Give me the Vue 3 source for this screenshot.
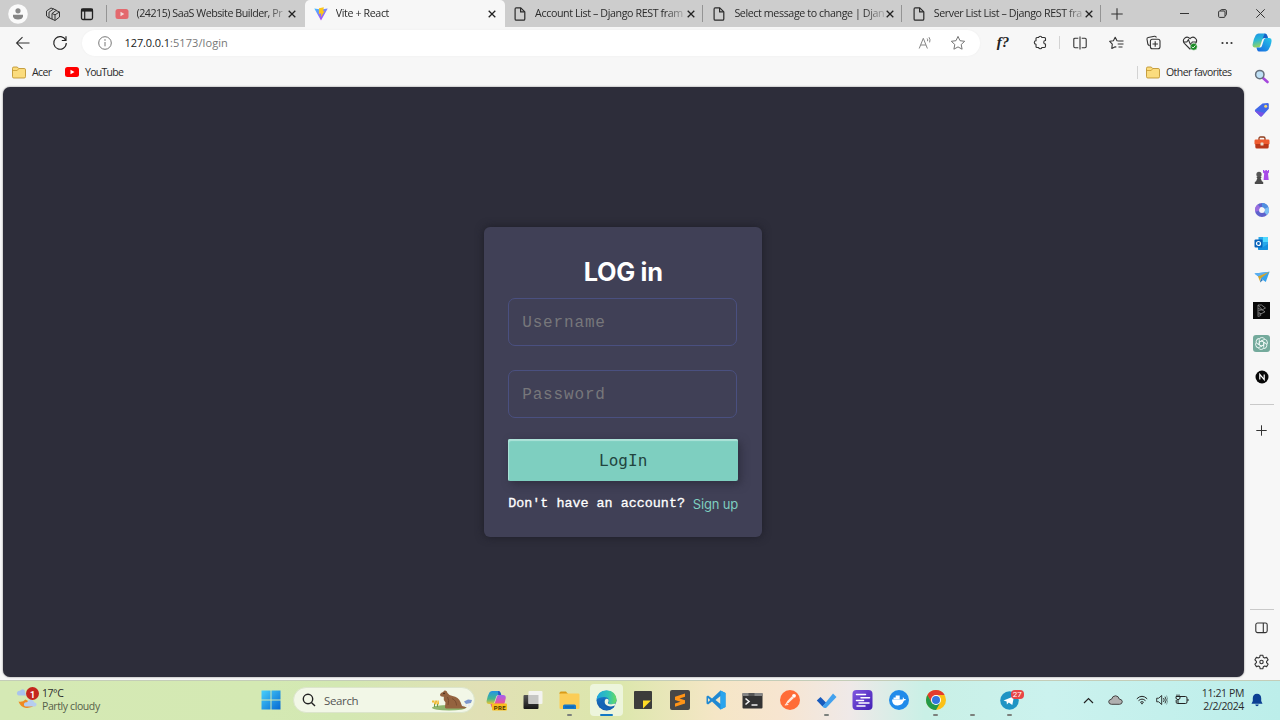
<script setup>
const tabs = [
  { kind: 'youtube', title: '(24215) SaaS Website Builder, Pr', active: false, sep: false, cls: 't1' },
  { kind: 'vite', title: 'Vite + React', active: true, sep: false, cls: 't2' },
  { kind: 'doc', title: 'Account List – Django REST fram', active: false, sep: true, cls: 't3' },
  { kind: 'doc', title: 'Select message to change | Djang', active: false, sep: true, cls: 't4' },
  { kind: 'doc', title: 'Server List List – Django REST fra', active: false, sep: true, cls: 't5' },
]
</script>

<template>
  <div class="screen">
    <header class="tabstrip">
      <div class="cell w36">
        <svg width="20" height="20" viewBox="0 0 20 20"><circle cx="10" cy="10" r="9.8" fill="#fafafa" /><circle cx="10" cy="6.8" r="2.6" fill="#8a8a8a" /><path d="M5 10.8h10v1.4c0 2-2.2 3.3-5 3.3s-5-1.300-5-3.300z" fill="#858585" /></svg>
      </div>
      <div class="cell w33">
        <svg width="16" height="16" viewBox="0 0 16 16" fill="#cdcdcd" stroke="#333" stroke-width="1" stroke-linejoin="round"><path d="M1.500 5l4.500-3 3 1.200v6L4 12 1.500 10z" /><path d="M4 6.200L8.500 3l3 1.200v6L7 13.200 4 11.500z" /><path d="M7 7.500L11 4.500l3.500 1.500v5L10 14.500 7 13z" /><path d="M7 7.500l3 1.300v5.500M10 8.800L14.500 6" fill="none" /></svg>
      </div>
      <div class="cell w36">
        <svg width="14" height="14" viewBox="0 0 14 14" fill="none" stroke="#222"><rect x="1.500" y="2" width="11" height="10.500" rx="1.500" stroke-width="1.300" /><path d="M1 3.200h12" stroke-width="2.800" /><path d="M4.700 4v8.500" stroke-width="1.200" /></svg>
      </div>
      <div v-for="t in tabs" :key="t.cls" class="tab" :class="[t.cls, { active: t.active, sep: t.sep }]">
        <svg v-if="t.kind === 'youtube'" class="fav" width="14" height="14" viewBox="0 0 14 14"><rect x="0.500" y="2" width="13" height="10" rx="2.500" fill="#e3696e" /><path d="M5.500 4.800v4.400L9.300 7z" fill="#f5dada" /></svg>
        <svg v-else-if="t.kind === 'vite'" class="fav" width="14" height="14" viewBox="0 0 14 14">
          <defs><linearGradient id="vg" x1="0" y1="0" x2="0.600" y2="1"><stop offset="0" stop-color="#41c4ff" /><stop offset="1" stop-color="#b63cfa" /></linearGradient></defs>
          <path d="M0.300 1.500L7 2.600l6.700-1.100L7 13.500z" fill="url(#vg)" /><path d="M5 1.200l4.800-.9-.6 4 1.500-.2L6.900 10.200l.4-3.700-2.400.4z" fill="#fdc51b" />
        </svg>
        <svg v-else class="fav" width="14" height="14" viewBox="0 0 14 14" fill="none" stroke="#2a2a2a" stroke-width="1.200" stroke-linejoin="round"><path d="M3.300.8h4.500l4 4v7.100c0 .8-.5 1.300-1.200 1.300H3.300c-.7 0-1.200-.5-1.200-1.300V2.100c0-.8.500-1.300 1.200-1.300z" /><path d="M7.600 1v3.900h4" /></svg>
        <span class="title">{{ t.title }}</span>
        <svg class="x" width="8" height="8" viewBox="0 0 8 8" stroke="#222" stroke-width="1.300"><path d="M.7.7l6.600 6.600M7.300.7L.7 7.300" /></svg>
      </div>
      <div class="cell plus"><svg width="12" height="12" viewBox="0 0 12 12" stroke="#333" stroke-width="1.100"><path d="M6 .3v11.400M.3 6h11.400" /></svg></div>
      <div class="spacer"></div>
      <div class="cell w38"><svg width="9" height="9" viewBox="0 0 9 9" stroke="#333"><path d="M0 4.500h9" /></svg></div>
      <div class="cell w38"><svg width="9" height="9" viewBox="0 0 9 9" fill="none" stroke="#333"><rect x=".6" y="2" width="6.400" height="6.400" rx="1" /><path d="M2.500 1.900V1.500Q2.600.6 3.600.6h3.500Q8.400.6 8.400 2v3.500q0 1-1.200 1.100" /></svg></div>
      <div class="cell w38"><svg width="9" height="9" viewBox="0 0 9 9" stroke="#333"><path d="M.3.3l8.400 8.400M8.700.3L.3 8.700" /></svg></div>
    </header>

    <nav class="toolbar">
      <div class="cell w36"><svg width="16" height="16" viewBox="0 0 16 16" fill="none" stroke="#333" stroke-width="1.100"><path d="M14.500 8H2M7.500 2.200L1.600 8l5.900 5.800" /></svg></div>
      <div class="cell w38"><svg width="16" height="16" viewBox="0 0 16 16" fill="none" stroke="#222" stroke-width="1.150"><path d="M13.700 5.200A6.300 6.300 0 1 0 14.300 8M14 1.300v4.200H9.800" /></svg></div>
      <div class="address">
        <svg width="14" height="14" viewBox="0 0 14 14" fill="none" stroke="#777"><circle cx="7" cy="7" r="6.300" /><path d="M7 6v4.300" /><circle cx="7" cy="4" r=".35" /></svg>
        <span class="url"><b>127.0.0.1</b>:5173/login</span>
        <div class="spacer"></div>
        <svg class="read" width="14" height="14" viewBox="0 0 14 14" fill="none" stroke="#858585" stroke-width="1"><path d="M1.200 12.500L5.300 2.300l4.100 10.200M2.700 9h5.200M9.200 2.500q.8 1.300.3 2.700M11 1.200q1.700 2.500.6 5.200" /></svg>
        <svg width="16" height="16" viewBox="0 0 16 16" fill="none" stroke="#777" stroke-linejoin="round"><path d="M8 1.400l2 4.300 4.700.6-3.500 3.200.9 4.700L8 11.900l-4.100 2.300.9-4.700L1.300 6.300 6 5.700z" /></svg>
      </div>
      <div class="cell w36 fq">f?</div>
      <div class="cell w38 ext"><svg width="15" height="15" viewBox="0 0 15 15" fill="none" stroke="#333" stroke-width="1.100" stroke-linejoin="round"><path d="M4 2.500h1.600a1.700 1.700 0 0 1 3.300 0H11.500q1 0 1 1v2a1.800 1.800 0 0 0 0 3.600v2.200q0 1.200-1 1.200H8.900a1.700 1.700 0 0 1-3.300 0H4q-1 0-1-1V9.200a1.700 1.700 0 0 1 0-3.400V3.500q0-1 1-1z" /></svg></div>
      <i class="vsep"></i>
      <div class="cell w37"><svg width="14" height="14" viewBox="0 0 14 14" fill="none" stroke="#333" stroke-width="1.100"><path d="M5.300 2.200H2q-1.200 0-1.200 1.200v7.200q0 1.200 1.200 1.200h3.300M8.700 2.200H12q1.200 0 1.200 1.200v7.200q0 1.200-1.200 1.200H8.700M7 .5v13" /></svg></div>
      <div class="cell w37"><svg width="15" height="14" viewBox="0 0 15 14" fill="none" stroke="#333" stroke-width="1.100" stroke-linejoin="round"><path d="M9.800 5L8 4.700 6.200 1.200 4.400 4.700.7 5.300l2.600 2.800-.5 4.300 3.400-1.700 1.100.6M9.500 5h5M8.700 8h5.800M9.500 11h4" /></svg></div>
      <div class="cell w37"><svg width="15" height="15" viewBox="0 0 15 15" fill="none" stroke="#333" stroke-width="1.100"><path d="M3.700 10.600C2.500 10.400 2 9.800 1.800 9L1 4.200Q.8 2.800 2.200 2.500L8.500 1.300q1.500-.2 1.900 1.200" /><rect x="4.400" y="4.200" width="9.600" height="9.600" rx="2" /><path d="M9.200 6.300v5.400M6.500 9h5.400" /></svg></div>
      <div class="cell w36"><svg width="16" height="16" viewBox="0 0 16 16" fill="none" stroke="#333" stroke-width="1.100"><path d="M8 14L2.400 8.300C-.6 4.500 4.500-.2 8 3.700c3.500-3.900 8.600.8 5.600 4.600z" /><path d="M1.500 7h3.300l1.600-2.300 2.100 5L10.300 7h3.600" /><circle cx="11.700" cy="11.700" r="3.500" fill="#188a23" stroke="#f7f7f7" stroke-width=".5" /><path d="M9.900 11.700l1.300 1.300 2.200-2.500" stroke="#fff" stroke-width=".9" /></svg></div>
      <div class="cell w37"><svg width="12" height="4" viewBox="0 0 12 4" fill="#333"><circle cx="1.500" cy="2" r="1.100" /><circle cx="6" cy="2" r="1.100" /><circle cx="10.500" cy="2" r="1.100" /></svg></div>
      <div class="cell copilot">
        <svg width="20" height="19" viewBox="0 0 20 19">
          <defs><linearGradient id="cp1" x1="0" y1="0" x2="0.300" y2="1"><stop offset="0" stop-color="#1c8fe8" /><stop offset=".5" stop-color="#2ab8d6" /><stop offset="1" stop-color="#9bd65a" /></linearGradient><linearGradient id="cp2" x1="1" y1="0" x2="0" y2="1"><stop offset="0" stop-color="#27c8e8" /><stop offset="1" stop-color="#1665e0" /></linearGradient></defs>
          <path d="M6.500.5H13q1.500 0 2 1.500l.9 3h-3.500q-1.600 0-2.100 1.500L8.200 13q-.5 1.500-2 1.500H3Q.3 14.500.6 11.500 1.300 6 3.800 2 4.800.5 6.500.5z" fill="url(#cp1)" />
          <path d="M13.500 18.500H7.200q-1.500 0-2-1.500l-.8-2.500h3.400q1.600 0 2.100-1.500L12 6.500Q12.500 5 14 5h3q3 0 2.500 3.500-.6 5-3.200 8.600-1 1.400-2.800 1.400z" fill="url(#cp2)" />
          <path d="M12.700.5q2.100 0 2.700 2.500l.5 2h-4q-1.300.2-1.700 1.500z" fill="#1762c9" />
        </svg>
      </div>
    </nav>

    <div class="body">
      <div class="left">
        <div class="bookmarks">
          <svg class="folder" width="14" height="13" viewBox="0 0 14 13"><path d="M1.800 1h3.500l1.400 1.500h5.500q1.300 0 1.300 1.300v6.900q0 1.300-1.300 1.300H1.800Q.5 12 .5 10.700V2.300Q.5 1 1.800 1z" fill="#fbdc7e" stroke="#b98c22" stroke-width=".8" /><path d="M.7 4.500h4.500l1.500-1.800" fill="none" stroke="#c89a30" stroke-width=".8" /></svg>
          <span class="acer">Acer</span>
          <svg class="yt" width="14" height="10" viewBox="0 0 14 10"><rect width="14" height="10" rx="2.500" fill="#f00" /><path d="M5.500 2.700v4.600L9.500 5z" fill="#fff" /></svg>
          <span class="ytt">YouTube</span>
          <div class="spacer"></div>
          <i class="vsep"></i>
          <svg class="folder f2" width="14" height="13" viewBox="0 0 14 13"><path d="M1.800 1h3.500l1.400 1.500h5.500q1.300 0 1.300 1.300v6.900q0 1.300-1.300 1.300H1.800Q.5 12 .5 10.700V2.300Q.5 1 1.800 1z" fill="#fbdc7e" stroke="#b98c22" stroke-width=".8" /><path d="M.7 4.500h4.500l1.500-1.800" fill="none" stroke="#c89a30" stroke-width=".8" /></svg>
          <span class="other">Other favorites</span>
        </div>
        <main class="page">
          <form class="card" @submit.prevent>
            <h1>LOG in</h1>
            <input type="text" placeholder="Username" />
            <input type="password" placeholder="Password" />
            <button type="button">LogIn</button>
            <p><span class="ask">Don't have an account?</span><a>Sign up</a></p>
          </form>
        </main>
      </div>

      <aside class="side">
        <div class="sc"><svg width="15" height="15" viewBox="0 0 15 15"><path d="M9 9l4.500 4" stroke="#a548dc" stroke-width="2.600" stroke-linecap="round" /><circle cx="5.800" cy="5.600" r="4.200" fill="#bfe0f5" stroke="#66707c" stroke-width="1.500" /></svg></div>
        <div class="sc"><svg width="16" height="16" viewBox="0 0 16 16"><path d="M8.500 1.500l5-.5q1.300 0 1.300 1.300v4.400L8 14q-1 1-2 0L1.300 9.500q-1-1 0-2z" fill="#4169e8" /><path d="M1 8.500L10.500 11 8 14q-1 1-2 0L1.300 9.500z" fill="#7953e4" /><circle cx="11.700" cy="4.200" r="1.500" fill="#f7d66b" /></svg></div>
        <div class="sc"><svg width="16" height="14" viewBox="0 0 16 14"><path d="M5 4V2.500Q5 1 6.500 1h3Q11 1 11 2.500V4" fill="none" stroke="#8e3b1c" stroke-width="1.300" /><rect x=".5" y="3.500" width="15" height="5" rx="1.200" fill="#ee5b2f" /><path d="M1.300 8h13.400v3q0 1.500-1.500 1.500H2.800q-1.500 0-1.500-1.500z" fill="#b9381a" /><rect x="6.500" y="6.500" width="3" height="3" rx=".6" fill="#eadfd0" /></svg></div>
        <div class="sc"><svg width="16" height="16" viewBox="0 0 16 16"><path d="M9 1h1.300v1h1V1h1.600v1h1V1H15v2.500l-1 1 .7 6.500H9.600l.6-6.500-1.200-1z" fill="#a84be8" /><circle cx="5" cy="5.400" r="2.600" fill="#575757" /><path d="M2.700 7.700h4.600v1.200H6.600l1.300 3.300 1.300.8v2H.8v-2l1.300-.8 1.300-3.300h-.7z" fill="#4b4b4b" /></svg></div>
        <div class="sc"><svg width="16" height="16" viewBox="0 0 16 16" fill="none" stroke-width="4"><circle cx="8" cy="8" r="5" stroke="#5f62cc" /><path d="M8 3a5 5 0 0 1 4.600 3" stroke="#4f8fe0" /><path d="M12.500 5.800A5 5 0 0 1 11.500 11.500" stroke="#7cc0f4" /><path d="M3.200 9.300A5 5 0 0 1 5 4" stroke="#9b6ee0" /></svg></div>
        <div class="sc"><svg width="15" height="15" viewBox="0 0 15 15"><path d="M4.500 1H13q1 0 1 1v11q0 1-1 1H4.500z" fill="#28a8ea" /><path d="M9 1h4q1 0 1 1v4H9z" fill="#50d9ff" /><path d="M4 8.500l5 2.500 5-3v5q0 1-1 1H5q-1 0-1-1z" fill="#1490df" /><rect x=".5" y="3.500" width="8" height="8" rx="1" fill="#0763ba" /><circle cx="4.500" cy="7.500" r="2" fill="none" stroke="#fff" stroke-width="1.200" /></svg></div>
        <div class="sc"><svg width="16" height="12" viewBox="0 0 16 12"><path d="M.5 2.500L15.500.8 11.800 11 7.500 8z" fill="#37a2ec" /><path d="M.5 2.500L15.500.8 5.500 6.500z" fill="#5aaef0" /><path d="M4 5.500L15.500.8 6.500 7.500v4z" fill="#d6a52b" /><path d="M6 11.500l2.800-2.300L7 7.500z" fill="#2478c8" /></svg></div>
        <div class="sc"><svg width="17" height="17" viewBox="0 0 17 17"><rect width="17" height="17" fill="#090909" /><path d="M5 14.500V3h3.500l4 3-3.300 1.800-4-1.300M5 3l4 4.500M5.500 8.500l3.500-.7 3 2-4 2-2.500-1.500M5.200 12h2.500v1.500l-2.500 1" fill="none" stroke="#8f8f8f" stroke-width=".8" /></svg></div>
        <div class="sc"><svg width="17" height="17" viewBox="0 0 17 17"><rect width="17" height="17" rx="3" fill="#74aa9c" /><g fill="none" stroke="#eef8f5" stroke-width=".9"><path v-for="r in 6" :key="r" :transform="`rotate(${r * 60} 8.5 8.500)`" d="M6.300 7.200V4.500q.3-2 2.500-2t3 1.700M6.300 7.200l2.200-1.300 3 1.800" /></g></svg></div>
        <div class="sc"><svg width="14" height="14" viewBox="0 0 14 14"><circle cx="7" cy="7" r="6.500" fill="#080808" /><path d="M4.800 9.600V4.400l4.400 5.200V4.400" fill="none" stroke="#fff" stroke-width="1.200" /></svg></div>
        <hr class="h1" />
        <div class="sc"><svg width="11" height="11" viewBox="0 0 11 11" stroke="#333"><path d="M5.500.3v10.400M.3 5.500h10.400" /></svg></div>
        <div class="spacer"></div>
        <hr />
        <div class="sc"><svg width="13" height="12" viewBox="0 0 13 12" fill="none" stroke="#333" stroke-width="1.100"><rect x=".8" y="1" width="11.400" height="9.600" rx="1.800" /><path d="M8.300 1v9.500" /></svg></div>
        <div class="sc last"><svg width="15" height="16" viewBox="0 0 15 16" fill="none" stroke="#333" stroke-width="1.100" stroke-linejoin="round"><path d="M6.200 1.200h2.600l.5 2 1.300.8 2-.6 1.500 2.400L12.600 7.300v1.400l1.500 1.500-1.500 2.400-2-.6-1.300.8-.5 2H6.200l-.5-2-1.300-.8-2 .6L.9 10.200l1.500-1.500V7.300L.9 5.800l1.500-2.400 2 .6 1.300-.8z" /><circle cx="7.500" cy="8" r="1.700" /></svg></div>
      </aside>
    </div>

    <footer class="taskbar">
      <div class="weather">
        <svg width="24" height="24" viewBox="0 0 24 24"><path d="M3 9.500q-2.500-.5-2-2.800T4 4.800Q6 2 8.500 4L10 9.500z" fill="#a9c3ec" /><path d="M2.500 15.500q4 1 7-2L19 19q-4 3.500-9 3-5.500-1-7.500-6.500z" fill="#ef8a22" /><path d="M9.500 20.500q-2.200-.7-1.500-2.800.8-1.700 3-1.400 1.500-3.500 5-2.300 2 .6 2.300 2.500 2.800.5 2.200 2.500-.4 1.500-2 1.500z" fill="#b6cdf0" /><circle cx="16.500" cy="7.500" r="6.500" fill="#c4261d" /></svg>
        <span class="one">1</span>
        <div class="wtext"><span class="temp">17°C</span><span class="desc">Partly cloudy</span></div>
      </div>
      <div class="cell w38"><svg width="20" height="20" viewBox="0 0 20 20"><defs><linearGradient id="win" x1="0" y1="0" x2="1" y2="1"><stop offset="0" stop-color="#48d0fb" /><stop offset="1" stop-color="#0669d2" /></linearGradient></defs><path d="M.5.500h9v9h-9zM10.500.5h9v9h-9zM.5 10.500h9v9h-9zM10.500 10.500h9v9h-9z" fill="url(#win)" /></svg></div>
      <div class="search">
        <svg width="14" height="14" viewBox="0 0 14 14" fill="none" stroke="#222" stroke-width="1.400"><circle cx="6" cy="6" r="4.700" /><path d="M9.400 9.400L13 13" /></svg>
        <span>Search</span>
        <svg class="marmot" width="42" height="22" viewBox="0 0 42 22"><ellipse cx="18" cy="18.800" rx="17" ry="2.800" fill="#8fb56d" /><path d="M1 12.500h7M3 14.500h5" stroke="#efb934" stroke-width="2" stroke-dasharray="2.500 .6" /><path d="M3.500 15v3M6.500 15v3" stroke="#6d9a4e" /><path d="M33 12.500l4-2 4 .5-1 3-5 1z" fill="#7d97ce" /><path d="M31 16.500h9" stroke="#e7e8ef" stroke-width="2" stroke-dasharray="2 1" /><path d="M9 5.500Q9.500 3.500 12 3l1.500-1.500Q16 1 16.500 4q1.500 2.500 5 3 6 1 8 6l1.500 4 5 1.500-3 1H16q-2.500.5-2-2l.5-4Q12 11 12.800 7.700 9 8 9 5.500z" fill="#94633f" /><path d="M16.500 8q2 3 .5 8M21 9.500q4.500 2 4.500 7" stroke="#76492e" stroke-width=".9" fill="none" /><circle cx="13" cy="4.500" r=".7" fill="#28180f" /></svg>
      </div>
      <div class="cell app">
        <svg width="21" height="21" viewBox="0 0 21 21"><defs><linearGradient id="cpa" x1="0" y1="0" x2="0" y2="1"><stop offset="0" stop-color="#2293e6" /><stop offset=".6" stop-color="#44b78d" /><stop offset="1" stop-color="#f0c52e" /></linearGradient><linearGradient id="cpb" x1="0" y1="0" x2="0" y2="1"><stop offset="0" stop-color="#a45ff0" /><stop offset=".6" stop-color="#e8549b" /><stop offset="1" stop-color="#f5863f" /></linearGradient></defs><path d="M6 1h6.500q1.400 0 1.900 1.500l.8 2.500h-3q-1.500 0-2 1.500l-2 6q-.5 1.500-2 1.500H3Q.2 14 .6 11 1.300 6 3.400 2.500 4.400 1 6 1z" fill="url(#cpa)" /><path d="M13 18.500H7.500q-1.500 0-2-1.500l-1-3H7q1.500 0 2-1.500l2-6Q11.500 5 13 5h4q3 0 2.800 3-.5 5-3.500 9-1.200 1.500-3.300 1.500z" fill="url(#cpb)" /><path d="M12 1q2 0 2.600 2l.7 2h-3z" fill="#2357c7" /><rect x="6" y="13.500" width="15" height="7" rx="1" fill="#f9bf1d" /></svg><span class="pre">PRE</span>
      </div>
      <div class="cell app"><svg width="20" height="20" viewBox="0 0 20 20"><defs><linearGradient id="tv" x1="0" y1="0" x2="0" y2="1"><stop offset="0" stop-color="#555" /><stop offset="1" stop-color="#161616" /></linearGradient></defs><rect x=".5" y="5" width="15" height="14" rx="1" fill="url(#tv)" /><rect x="5.500" y="1" width="14" height="13" rx="1" fill="#f3f3f0" /><path d="M5.500 5h10v9h-10z" fill="#c6c6c4" /></svg></div>
      <div class="cell app"><svg width="21" height="19" viewBox="0 0 21 19"><path d="M.5 2Q.5.5 2 .5h5L9 3h-8.500z" fill="#d99b19" /><rect x=".5" y="2.500" width="20" height="15.500" rx="1.300" fill="#fbcd57" /><path d="M4 18v-3q0-1.500 1.500-1.500h10q1.500 0 1.500 1.500v3z" fill="#1679ca" /><path d="M6 16h9" stroke="#0d5fa9" /></svg><i class="dot"></i></div>
      <div class="cell app on">
        <svg width="21" height="21" viewBox="0 0 21 21"><defs><linearGradient id="e1" x1="0" y1="0" x2="1" y2="0"><stop offset="0" stop-color="#1fa6e0" /><stop offset=".6" stop-color="#31c4b4" /><stop offset="1" stop-color="#6cdb5e" /></linearGradient><linearGradient id="e2" x1="0" y1="0" x2="0" y2="1"><stop offset="0" stop-color="#1c8ad8" /><stop offset="1" stop-color="#124ea0" /></linearGradient></defs><circle cx="10.500" cy="10.500" r="10" fill="url(#e2)" /><path d="M.6 9.500Q1.800.5 10.500.5q9.500 0 10 9.500.1 4.200-4.700 4.300-3.300 0-3.500-1.500 1.400-1.600.5-3.600-1.300-2.300-4.500-2.300Q3 6.900.6 9.500z" fill="url(#e1)" /><path d="M9 10q-1.200 3.500 2 5.500 3.500 1.800 7 .3l1.500-.5.500-1.800-4.500.8q-3.400 0-3.600-1.500 1.200-1.500.6-3.200-2-1.800-3.500.4z" fill="#eef6df" /><path d="M8 8.700q-2.300 5.300 2 8 4 2 8.700-.4-4 5-10.700 3.500Q3 18 4 13q.7-3.200 4-4.300z" fill="#1564b7" /></svg><i class="dot wide"></i>
      </div>
      <div class="cell app"><svg width="18" height="18" viewBox="0 0 18 18"><rect width="18" height="18" rx="1" fill="#3c3d3b" /><path d="M9 9.500h8l-8 8z" fill="#ffdd26" /></svg></div>
      <div class="cell app"><svg width="20" height="20" viewBox="0 0 20 20"><rect width="20" height="20" rx="2" fill="#474747" /><path d="M15 3.500v3.200L9.500 8.500 15 10.200v3.300L5 16.800v-3.200l5.500-1.800L5 10.100V6.800z" fill="#ff9417" /></svg></div>
      <div class="cell app"><svg width="20" height="20" viewBox="0 0 20 20"><path d="M14.500.5L19.500 3v14l-5 2.500-8.500-8-4 3-1.500-1V6.500l1.500-1 4 3zM14.500 6l-5 4 5 4zM2 8v4l2.200-2z" fill="#1f88d2" fill-rule="evenodd" /><path d="M14.500.5L19.500 3v14l-5 2.500z" fill="#29a4ee" /></svg></div>
      <div class="cell app"><svg width="21" height="17" viewBox="0 0 21 17"><rect x=".5" y="1" width="20" height="15.500" rx="1" fill="#333" /><path d="M.5 1h20v3H.5z" fill="#858585" /><path d="M6.500 1h6v3h-6z" fill="#555" /><path d="M3.500 6.500L7 9.500l-3.500 3M9.500 13h6" stroke="#eee" stroke-width="1.600" fill="none" /></svg></div>
      <div class="cell app"><svg width="20" height="20" viewBox="0 0 20 20"><circle cx="10" cy="10" r="10" fill="#ff6c37" /><circle cx="14" cy="5.800" r="1.900" fill="#fff" /><path d="M12 6.200l1.800 1.800-5 4.800L5 15l2.300-4z" fill="#ffe9de" /><path d="M4.800 15l3.500-.5" stroke="#fff" stroke-width=".9" /></svg></div>
      <div class="cell app"><svg width="21" height="17" viewBox="0 0 21 17"><path d="M.8 8.500L4.500 5l5.700 5.700-3.700 3.700z" fill="#185abd" /><path d="M6.500 14.500L17 1.500 20.500 5 10.300 15.800q-2 1-3.800-1.300z" fill="#43a1ee" /></svg><i class="dot"></i></div>
      <div class="cell app"><svg width="21" height="20" viewBox="0 0 21 20"><defs><linearGradient id="pur" x1="0" y1="0" x2="1" y2="1"><stop offset="0" stop-color="#8057df" /><stop offset="1" stop-color="#4220b4" /></linearGradient></defs><rect x=".5" width="20" height="20" rx="4" fill="url(#pur)" /><path d="M4.500 4.500h9M9 7.700h8.500M4.500 10.500h7M7 13h10M5 16h8" stroke="#fff" stroke-width="1.500" stroke-linecap="round" /></svg></div>
      <div class="cell app"><svg width="20" height="20" viewBox="0 0 20 20"><circle cx="10" cy="10" r="10" fill="#218bea" /><path d="M3 9.500h10.500q.7-.7.300-2.200 1 .3 1.300 1.800 1-.3 2 .3-.5 1-2.100 1.200-1.700 4.900-6.200 4.900Q3 15.500 3 9.500zM4.500 7.600h6.200v1.700H4.500zM6.700 5.500h4v1.900h-4z" fill="#fff" /></svg></div>
      <div class="cell app"><svg width="20" height="20" viewBox="0 0 20 20"><circle cx="10" cy="10" r="10" fill="#fbc117" /><path d="M1.340 5A10 10 0 0 1 18.660 5H10L5.500 12.500z" fill="#e33b2e" /><path d="M1.340 5A10 10 0 0 0 10 20l4.300-7.500H5.700z" fill="#229a4a" /><circle cx="10" cy="10" r="5" fill="#fff" /><circle cx="10" cy="10" r="4" fill="#3376df" /></svg><i class="dot"></i></div>
      <div class="cell app"><i class="dot"></i></div>
      <div class="cell app"><svg width="19" height="19" viewBox="0 0 19 19"><circle cx="9.500" cy="9.500" r="9.300" fill="#2094c4" /><path d="M3.500 9.500L14 5.300l-1.700 8.800-3.500-2.500-1.900 2-.3-3z" fill="#fff" /></svg><span class="n27">27</span><i class="dot"></i></div>
      <div class="spacer"></div>
      <div class="cell chev"><svg width="11" height="7" viewBox="0 0 11 7" fill="none" stroke="#222" stroke-width="1.200"><path d="M1 6l4.500-4.500L10 6" /></svg></div>
      <div class="cell cloud"><svg width="15" height="10" viewBox="0 0 15 10"><path d="M3.500 9.300Q.8 9.200.7 6.700.9 4.500 3.500 4.200 4.500.8 7.600.8q3 .2 3.700 3.300 2.800.2 3 2.600-.2 2.500-2.700 2.600z" fill="#b0b0b0" stroke="#454545" /></svg></div>
      <div class="cell w20"><svg width="12" height="10" viewBox="0 0 12 10" fill="none" stroke="#222" stroke-width="1"><path d="M.8 3.800q5.200-5 10.400 0M2.500 5.700q3.500-3.200 7 0M4.200 7.400q1.800-1.500 3.600 0" /><circle cx="6" cy="8.500" r=".5" /></svg></div>
      <div class="cell w19"><svg width="12" height="12" viewBox="0 0 12 12" fill="none" stroke="#222" stroke-width=".9"><path d="M.7 4.200h2L5.700 1.500v9L2.700 7.800h-2zM7.500 4q1.500 2 0 4M9 2.700q2.500 3.300 0 6.600" /><path d="M10.500 1.500q3 4.500 0 9" stroke="#7a9a98" /></svg></div>
      <div class="cell w22"><svg width="14" height="12" viewBox="0 0 14 12" fill="none" stroke="#222"><path d="M5 2.500h5.500q1.500 0 1.500 1.500v4q0 1.500-1.500 1.500H2.500Q1.200 9.500 1.200 8.200V6M13 5v2M1 2.500h4v2q-2 2.500-4 0zM2 2.500V.5M4 2.500V.5M3 5.500v4" /></svg></div>
      <div class="clock"><span>11:21 PM</span><span>2/2/2024</span></div>
      <div class="cell bell"><svg width="12" height="14" viewBox="0 0 12 14" fill="#0b3f93"><path d="M6 .7q4 .2 4.200 4.300v3l1.300 2.700H.5L1.800 8V5Q2 .9 6 .7zM4.200 11.500h3.600Q7.400 13.200 6 13.300q-1.400-.1-1.800-1.800z" /></svg></div>
    </footer>
  </div>
</template>

<style>
html, body { margin: 0; overflow: hidden; }
</style>

<style scoped>
.screen { width: 1280px; height: 720px; display: flex; flex-direction: column; background: #f7f7f7; overflow: hidden; font-family: "Open Sans", "Noto Sans", sans-serif; font-size: 11px; color: #2b2b2b; }
.screen * { box-sizing: border-box; }
svg { display: block; flex: none; }
.cell { display: flex; align-items: center; justify-content: center; flex: none; position: relative; }
.spacer { flex: 1; }
.w19 { width: 19px; } .w20 { width: 20px; } .w22 { width: 22px; } .w33 { width: 33px; }
.w36 { width: 36px; } .w37 { width: 37px; } .w38 { width: 38px; }
.tabstrip { height: 27px; display: flex; background: #cdcdcd; flex: none; padding-right: 1px; }
.tab { width: 199.300px; display: flex; align-items: center; padding: 0 8px 0 8.500px; flex: none; border-right: 1px solid transparent; position: relative; white-space: nowrap; }
.tab.active { background: #f7f7f7; border-radius: 5px 5px 0 0; }
.tab .title { margin-left: 8px; width: 150px; font-size: 10.700px; letter-spacing: -0.400px; mask-image: linear-gradient(90deg, #000 130px, rgba(0, 0, 0, .25) 148px); line-height: 18px; margin-top: -1px; }
.tab.t1 .title { letter-spacing: -0.480px; }
.tab .x { margin-left: auto; }
.tab.t1 { margin-left: 1px; }
.t1::before { content: ""; width: 1px; height: 17px; background: #949494; position: absolute; left: 0; top: 5px; }
.tab.sep::after { content: ""; width: 1px; height: 17px; background: #949494; position: absolute; right: 0; top: 5px; }
.plus { width: 29px; }
.toolbar { height: 32px; flex: none; display: flex; align-items: center; padding: 0 0 1px 5px; }
.toolbar .cell { height: 31px; }
.address { width: 898px; height: 26px; margin-left: 3px; margin-right: 5px; border-radius: 13px; background: #fff; display: flex; align-items: center; padding: 0 14px 0 16px; box-shadow: 0 0 2px #ececec; }
.url { margin-left: 12.500px; color: #777; letter-spacing: .08px; }
.url b { font-weight: 400; color: #202020; letter-spacing: -0.100px; }
.read { margin-right: 18px; }
.fq { font: italic bold 15px "Liberation Serif", serif; color: #222; }
.vsep { width: 1px; height: 13px; background: #d3d3d3; flex: none; margin: 0 1px 0 0; }
.copilot { width: 34px; }
.body { flex: 1; display: flex; min-height: 0; }
.left { width: 1243.500px; display: flex; flex-direction: column; padding-left: 3.400px; flex: none; }
.bookmarks { height: 28px; flex: none; display: flex; align-items: center; padding: 0 11.500px 2px 8.600px; font-size: 10.500px; }
.acer { margin-left: 6px; width: 21px; letter-spacing: -0.600px; }
.yt { margin-left: 12px; }
.ytt { margin-left: 6px; letter-spacing: -0.700px; }
.f2 { margin: 0 6px 0 7px; }
.other { letter-spacing: -0.550px; width: 66px; white-space: nowrap; }
.page { flex: 1; margin-bottom: 3px; border-radius: 7px; background: #2d2d3a; display: flex; align-items: center; justify-content: center; box-shadow: 0 0 2px #777; }
.card { width: 278px; height: 310px; border-radius: 6px; background: #404056; box-shadow: 0 0 8px #1e1e28; padding: 28px 24px 0; display: flex; flex-direction: column; margin-right: .5px; }
.card h1 { margin: 0 0 10px; height: 33px; text-align: center; font: 700 25.300px/33px Inter, Roboto, sans-serif; letter-spacing: -.3px; color: #fff; }
.card input { width: 229px; height: 48px; margin: 0 0 24px; padding: 2px 13px 0; border: 1px solid #4a5080; border-radius: 7px; background: transparent; color: #ddd; font: 16px "Liberation Mono", monospace; letter-spacing: .85px; outline: none; }
.card input::placeholder { color: #77777b; opacity: 1; }
.card button { height: 42px; margin-top: -3px; border: 0; border-radius: 2px; background: #7ecfc0; color: #22443f; font: 16px "DejaVu Sans Mono", monospace; box-shadow: inset 1px 2px 1px #aee3d9, 3px 3px 9px #2f2f40; padding: 0; }
.card p { margin: 13px 0 0; display: flex; justify-content: space-between; white-space: nowrap; line-height: 20px; }
.ask { font: 13.400px/20px "Liberation Mono", monospace; color: #fff; -webkit-text-stroke: .3px #fff; }
.card a { color: #7ecfc0; font: 400 13px/20px Inter, Roboto, sans-serif; letter-spacing: -.15px; }
.side { width: 36px; display: flex; flex-direction: column; align-items: center; padding-top: 1px; }
.sc { height: 33.400px; width: 36px; display: flex; align-items: center; justify-content: center; flex: none; }
.side hr { width: 24px; height: 1px; border: 0; background: #c9c9c9; margin: 0 0 2px; flex: none; }
.side hr.h1 { margin: 10px 0 9px; }
.last { margin-bottom: 1.500px; }
.taskbar { height: 40px; flex: none; display: flex; align-items: center; border-top: 1px solid #c4cdb8; padding-bottom: 1px; background: linear-gradient(90deg, #d5e9b4 0, #d4e9b3 260px, #d3e8b2 340px, #e1e0b5 480px, #dce7ac 620px, #f5e6c6 715px, #f7e5d0 780px, #efe9e8 850px, #c9f0e6 925px, #cbf2ee 1050px, #bceeea 1280px); }
.weather { width: 252px; display: flex; align-items: center; padding-left: 16px; flex: none; position: relative; }
.weather svg { margin-top: -4px; }
.one { position: absolute; left: 26px; top: 2px; width: 13px; text-align: center; font: bold 9px/12px Roboto, sans-serif; color: #fff; }
.wtext { display: flex; flex-direction: column; margin-left: 2px; font-size: 10.500px; line-height: 13px; letter-spacing: -0.450px; }
.desc { color: #56604a; letter-spacing: -0.400px; }
.search { width: 182px; height: 26px; margin: 0 3.500px 0 3px; border-radius: 13px; background: #f2f7e7; border: 1px solid #dce5cc; display: flex; align-items: center; padding-left: 8px; flex: none; }
.search span { margin-left: 8px; font-size: 11.500px; letter-spacing: -.35px; color: #555; flex: 1; }
.marmot { margin-right: 1px; }
.app { width: 36.600px; height: 39px; }
.on::before { content: ""; position: absolute; inset: 3px 2px 4px; background: #edf5dc; border-radius: 4px; }
.on svg { position: relative; }
.dot { position: absolute; bottom: 4px; width: 5px; height: 2px; border-radius: 1px; background: #7b807c; }
.dot.wide { width: 13px; background: #1479c4; }
.pre { position: absolute; left: 14px; top: 23px; width: 15px; text-align: center; font: bold 6px/7px Roboto, sans-serif; letter-spacing: .4px; color: #4e3500; }
.n27 { position: absolute; left: 20px; top: 9px; width: 13px; height: 9px; border-radius: 4px; background: #e84646; color: #fff; font: 8px/9px Roboto, sans-serif; text-align: center; }
.chev { width: 28px; } .cloud { width: 26px; margin-right: 4px; }
.clock { width: 51px; display: flex; flex-direction: column; align-items: flex-end; font-size: 10.500px; line-height: 13px; letter-spacing: -0.380px; white-space: nowrap; flex: none; }
.bell { width: 25px; margin-right: 11px; }
</style>
